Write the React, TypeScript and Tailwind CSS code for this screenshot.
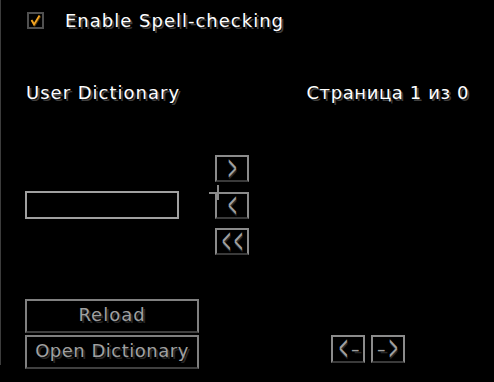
import React from "react";

const white = "text-white [text-shadow:2px_2px_0_#3f3f3f]";
const gray = "text-[#a0a0a0] [text-shadow:2px_2px_0_#282828]";

function SmallBtn({ children }: { children: React.ReactNode }) {
  return (
    <div className="w-[34px] h-[27px] border-2 border-[#8b8b8b] border-b-[#3a3a3a] flex items-center justify-center">
      {children}
    </div>
  );
}

function Chev({ c }: { c: string }) {
  return (
    <span className={`inline-block text-[34px] leading-[27px] scale-x-[0.34] mx-[-9px] pb-[3px] ${gray}`}>{c}</span>
  );
}

export default function App() {
  return (
    <div className="relative w-[494px] h-[382px] bg-black overflow-hidden" style={{ fontFamily: '"DejaVu Sans", sans-serif' }}>
      <div className="h-[365px] border-l border-[#3c3c3c] flex flex-col">
        {/* checkbox row */}
        <div className="flex items-start pt-[12px] pl-[26px]">
          <div className="w-[17px] h-[17px] border-2 border-[#505050] flex items-center justify-center">
            <svg width="13" height="13" viewBox="0 0 13 13">
              <polyline points="2.5,6 5,10.5 10.5,1.5" fill="none" stroke="#5a3a08" strokeWidth="1.8" transform="translate(0.8,0.8)" />
              <polyline points="2.5,6 5,10.5 10.5,1.5" fill="none" stroke="#f5a623" strokeWidth="1.8" />
            </svg>
          </div>
          <span className={`ml-[21px] text-[18px] leading-[18px] tracking-[1px] ${white}`}>Enable Spell-checking</span>
        </div>

        {/* header row */}
        <div className="flex justify-between items-start mt-[54px] pl-[25px] pr-[25px]">
          <span className={`text-[18px] leading-[18px] tracking-[1px] ${white}`}>User Dictionary</span>
          <span className={`text-[18px] leading-[18px] tracking-[0.6px] ${white}`}>Страница 1 из 0</span>
        </div>

        {/* middle row */}
        <div className="flex items-center mt-[53px] pl-[24px]">
          <div className="w-[154px] h-[28px] border-2 border-[#a0a0a0] bg-black" />
          <div className="ml-[36px] flex flex-col">
            <SmallBtn><Chev c=">" /></SmallBtn>
            <div className="mt-[10px]"><SmallBtn><Chev c="<" /></SmallBtn></div>
            <div className="mt-[9px]"><SmallBtn><Chev c="<" /><span className="w-[1px]" /><Chev c="<" /></SmallBtn></div>
          </div>
        </div>

        {/* bottom row */}
        <div className="flex items-start mt-[44px] pl-[24px]">
          <div className="flex flex-col gap-[2px]">
            <div className={`w-[174px] h-[34px] border-2 border-[#808080] border-b-[#404040] flex items-center justify-center pb-[2px] text-[18px] leading-[18px] tracking-[1px] ${gray}`}>Reload</div>
            <div className={`w-[174px] h-[34px] border-2 border-[#808080] border-b-[#404040] flex items-center justify-center pb-[2px] text-[18px] leading-[18px] tracking-[0.5px] ${gray}`}>Open Dictionary</div>
          </div>
          <div className="flex gap-[6px] mt-[36px] ml-[132px]">
            <div className="w-[34px] h-[28px] border-2 border-[#8b8b8b] border-b-[#3a3a3a] flex items-center justify-center gap-[3px]">
              <Chev c="<" />
              <span className={`inline-block text-[18px] leading-[18px] scale-x-[1.4] ${gray}`}>-</span>
            </div>
            <div className="w-[34px] h-[28px] border-2 border-[#8b8b8b] border-b-[#3a3a3a] flex items-center justify-center gap-[3px]">
              <span className={`inline-block text-[18px] leading-[18px] scale-x-[1.4] ${gray}`}>-</span>
              <Chev c=">" />
            </div>
          </div>
        </div>
      </div>

      {/* mouse cursor crosshair */}
      <div className="absolute left-[209px] top-[192px] w-[16px] h-[2px] bg-[#8a8a8a]" />
      <div className="absolute left-[217px] top-[185px] w-[2px] h-[15px] bg-[#8a8a8a]" />
    </div>
  );
}
